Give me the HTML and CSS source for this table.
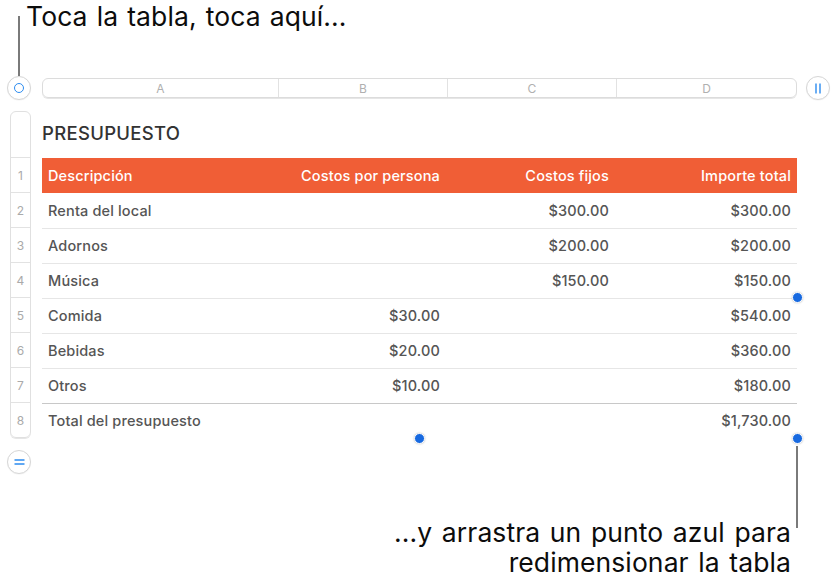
FILE: index.html
```html
<!DOCTYPE html>
<html lang="es">
<head>
<meta charset="utf-8">
<title>Presupuesto</title>
<link rel="stylesheet" href="styles.css">
</head>
<body>
<div class="page">
  <p class="callout-top">Toca la tabla, toca aquí...</p>
  <span class="leader leader-top"></span>

  <div class="toolbar">
    <button class="round-btn select-btn" aria-label="Seleccionar tabla"><span class="ring"></span></button>
    <div class="col-bar">
      <span class="col-a">A</span>
      <span class="col-b">B</span>
      <span class="col-c">C</span>
      <span class="col-d">D</span>
    </div>
    <button class="round-btn cols-btn" aria-label="Columnas">
      <svg width="8" height="11" viewBox="0 0 8 11"><path d="M2 0.5v10M6 0.5v10" stroke="#2d8cf0" stroke-width="1.4" fill="none"/></svg>
    </button>
  </div>

  <div class="sheet">
    <div class="row-bar">
      <div class="rn rn-top"></div>
      <div class="rn">1</div>
      <div class="rn">2</div>
      <div class="rn">3</div>
      <div class="rn">4</div>
      <div class="rn">5</div>
      <div class="rn">6</div>
      <div class="rn">7</div>
      <div class="rn last">8</div>
    </div>

    <div class="table-wrap">
      <h1 class="title">PRESUPUESTO</h1>
      <table class="budget">
        <colgroup>
          <col class="w-a"><col class="w-b"><col class="w-c"><col class="w-d">
        </colgroup>
        <thead>
          <tr><th class="left">Descripción</th><th>Costos por persona</th><th>Costos fijos</th><th>Importe total</th></tr>
        </thead>
        <tbody>
          <tr><td class="left">Renta del local</td><td></td><td>$300.00</td><td>$300.00</td></tr>
          <tr><td class="left">Adornos</td><td></td><td>$200.00</td><td>$200.00</td></tr>
          <tr><td class="left">Música</td><td></td><td>$150.00</td><td>$150.00</td></tr>
          <tr><td class="left">Comida</td><td>$30.00</td><td></td><td>$540.00</td></tr>
          <tr><td class="left">Bebidas</td><td>$20.00</td><td></td><td>$360.00</td></tr>
          <tr><td class="left">Otros</td><td>$10.00</td><td></td><td>$180.00</td></tr>
        </tbody>
        <tfoot>
          <tr><td class="left">Total del presupuesto</td><td></td><td></td><td>$1,730.00</td></tr>
        </tfoot>
      </table>
      <span class="dot dot-right-mid"></span>
      <span class="dot dot-bottom-mid"></span>
      <span class="dot dot-corner"></span>
    </div>
  </div>

  <button class="round-btn rows-btn" aria-label="Filas">
    <svg width="11" height="8" viewBox="0 0 11 8"><path d="M0.5 2h10M0.5 6h10" stroke="#2d8cf0" stroke-width="1.4" fill="none"/></svg>
  </button>

  <span class="leader leader-bottom"></span>
  <p class="callout-bottom">...y arrastra un punto azul para<br>redimensionar la tabla</p>
</div>
</body>
</html>
```

FILE: styles.css
```css
* { box-sizing: border-box; }

html, body {
  margin: 0;
  padding: 0;
  background: #ffffff;
}

body {
  font-family: Inter, "Noto Sans", "Liberation Sans", sans-serif;
  color: #111;
  width: 838px;
  height: 585px;
  overflow: hidden;
}

.page {
  position: relative;
  width: 838px;
  height: 585px;
}

.callout-top {
  margin: 0;
  padding: 0 0 0 26px;
  height: 76px;
  font-size: 26.5px;
  line-height: 32px;
  font-weight: 400;
  color: #0c0c0c;
  letter-spacing: 0.1px;
  word-spacing: 1.5px;
}

.leader {
  position: absolute;
  width: 2px;
  background: #7a7a7a;
}
.leader-top { left: 18px; top: 16px; height: 60px; }
.leader-bottom { left: 796px; top: 446px; height: 82px; }

.toolbar {
  display: flex;
  align-items: center;
  height: 24px;
  padding-left: 7px;
}

.round-btn {
  width: 24px;
  height: 24px;
  border-radius: 50%;
  border: 1px solid #d6d6d6;
  background: #fff;
  padding: 0;
  display: flex;
  align-items: center;
  justify-content: center;
  box-shadow: 0 0.5px 1px rgba(0,0,0,0.06);
}

.ring {
  width: 10px;
  height: 10px;
  border-radius: 50%;
  border: 1.5px solid #2d8cf0;
}

.col-bar {
  margin-left: 11px;
  width: 755px;
  height: 20px;
  border: 1px solid #dcdcdc;
  border-radius: 6px;
  display: grid;
  grid-template-columns: 235px 169px 169px 1fr;
  font-size: 12px;
  color: #b0b0b0;
  box-shadow: 0 1px 0 #e6e6e6;
}
.col-bar span {
  display: flex;
  align-items: center;
  justify-content: center;
  border-left: 1px solid #e2e2e2;
}
.col-bar .col-a { border-left: none; }

.cols-btn { margin-left: 9px; }

.sheet {
  display: flex;
  margin-top: 11px;
  padding-left: 10px;
}

.row-bar {
  width: 21px;
  border: 1px solid #e0e0e0;
  border-radius: 6px;
  display: flex;
  flex-direction: column;
  box-shadow: 0 1px 0 #e6e6e6;
}
.rn {
  height: 35px;
  border-bottom: 1px solid #e2e2e2;
  font-size: 12px;
  color: #aaaaaa;
  display: flex;
  align-items: center;
  justify-content: center;
}
.rn-top { height: 46px; }
.rn.last { border-bottom: none; height: 34px; }

.table-wrap {
  position: relative;
  margin-left: 11px;
  width: 755px;
}

.title {
  margin: 0;
  height: 47px;
  padding-top: 11px;
  font-size: 18.5px;
  line-height: 22px;
  font-weight: 500;
  color: #333;
  letter-spacing: 0.3px;
}

.budget {
  width: 755px;
  border-collapse: collapse;
  table-layout: fixed;
  font-size: 14.5px;
  letter-spacing: 0.15px;
}
.w-a { width: 235px; }
.w-b { width: 169px; }
.w-c { width: 169px; }
.w-d { width: 182px; }

.budget th, .budget td {
  height: 35px;
  padding: 0 6px;
  text-align: right;
  white-space: nowrap;
}
.budget .left { text-align: left; }

.budget thead th {
  background: #f05e36;
  color: #fff;
  font-weight: 500;
}

.budget tbody td {
  color: #555;
  font-weight: 500;
  border-bottom: 1px solid #e6e6e6;
}
.budget tbody tr:last-child td { border-bottom: 1px solid #c8c8c8; }

.budget tfoot td {
  color: #555;
  font-weight: 500;
}

.dot {
  position: absolute;
  width: 11px;
  height: 11px;
  border-radius: 50%;
  background: #1769e0;
  border: 1.5px solid #fff;
  box-shadow: 0 0 2px rgba(0,0,0,0.25);
}
.dot-right-mid { left: 750px; top: 181px; }
.dot-bottom-mid { left: 372px; top: 322px; }
.dot-corner { left: 750px; top: 322px; }

.rows-btn {
  margin-top: 12px;
  margin-left: 7px;
}

.callout-bottom {
  position: absolute;
  right: 47px;
  top: 517px;
  margin: 0;
  text-align: right;
  font-size: 26.5px;
  line-height: 30px;
  color: #0c0c0c;
  letter-spacing: 0.1px;
  word-spacing: 2px;
}
```
